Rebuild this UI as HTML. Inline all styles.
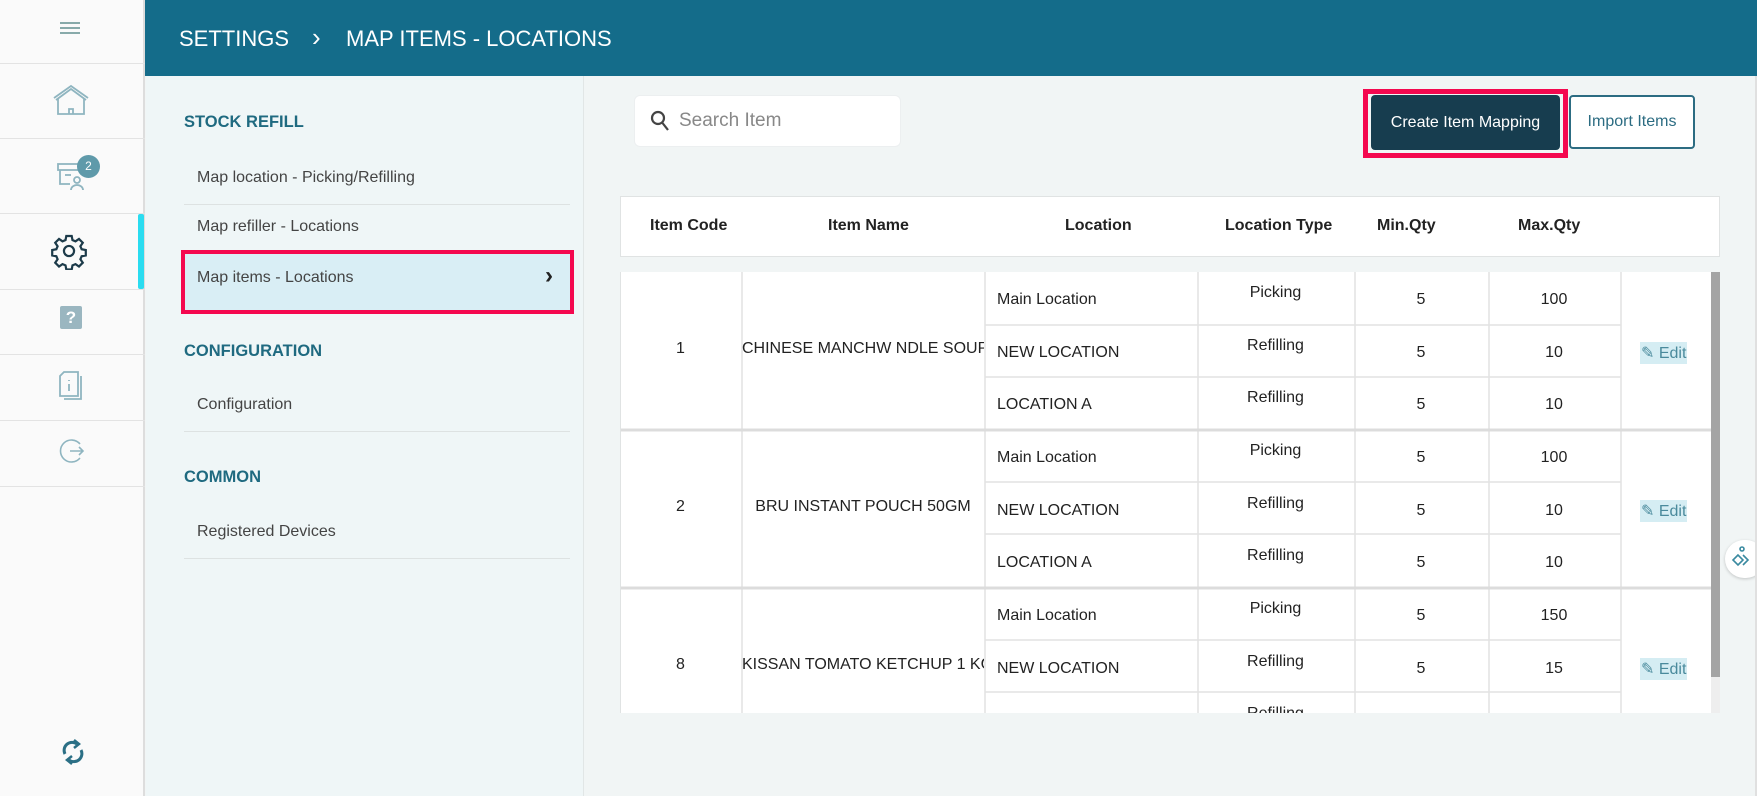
<!DOCTYPE html>
<html><head><meta charset="utf-8"><style>
*{box-sizing:border-box;margin:0;padding:0}
body{width:1757px;height:796px;overflow:hidden;background:#f1f5f5;font-family:"Liberation Sans",sans-serif;position:relative;color:#333}
.abs{position:absolute}
.rail{left:0;top:0;width:145px;height:796px;background:#fafafa;border-right:2px solid #ddd}
.rl{position:absolute;left:0;width:145px;height:1px;background:#e3e3e3}
.hdr{left:145px;top:0;width:1612px;height:76px;background:#146c8a;color:#fff;font-size:22px}
.side{left:146px;top:76px;width:438px;height:720px;background:#eff6f7;border-right:1px solid #e1e6e6}
.sec{position:absolute;left:38px;font-size:16.5px;font-weight:bold;color:#1f6a80}
.it{position:absolute;left:51px;font-size:16px;color:#444}
.ln{position:absolute;left:38px;width:386px;height:1px;background:#dde2e2}
.cell{position:absolute;font-size:16px;color:#222;text-align:center}
</style></head><body>
<div class="abs rail">
 <div class="abs" style="left:60px;top:22px;width:20px;height:2px;background:#8aa;box-shadow:0 5px 0 #8aa,0 10px 0 #8aa"></div>
 <div class="rl" style="top:63px"></div><div class="rl" style="top:138px"></div><div class="rl" style="top:213px"></div><div class="rl" style="top:289px"></div><div class="rl" style="top:354px"></div><div class="rl" style="top:420px"></div><div class="rl" style="top:486px"></div>
 <svg class="abs" style="left:52px;top:84px" width="38" height="32" viewBox="0 0 38 32" fill="none" stroke="#8fb5c0" stroke-width="1.8"><path d="M2 14 L19 2 L36 14"/><path d="M4 16 L19 5 L34 16"/><path d="M6 15 V30 H32 V15"/><path d="M17 30 V25 H21 V30"/></svg>
 <svg class="abs" style="left:56px;top:160px" width="32" height="32" viewBox="0 0 32 32" fill="none" stroke="#8fb5c0" stroke-width="1.8"><rect x="2" y="4" width="22" height="6"/><path d="M4 10 V24 H14"/><path d="M9 15 H15"/><circle cx="21" cy="20" r="3"/><path d="M15 30 a6 5 0 0 1 12 0"/></svg>
 <div class="abs" style="left:77px;top:155px;width:23px;height:23px;border-radius:50%;background:#5f9aaa;color:#fff;font-size:12px;text-align:center;line-height:23px">2</div>
 <div class="abs" style="left:138px;top:214px;width:6px;height:75px;background:#2adcf0;border-radius:2px"></div>
 <svg class="abs" style="left:50px;top:232px" width="38" height="38" viewBox="0 0 24 24" fill="none" stroke="#1d3b4a" stroke-width="1.4"><circle cx="12" cy="12" r="3.2"/><path d="M10.3 2.5h3.4l.5 2.6 1.9.8 2.2-1.5 2.4 2.4-1.5 2.2.8 1.9 2.6.5v3.4l-2.6.5-.8 1.9 1.5 2.2-2.4 2.4-2.2-1.5-1.9.8-.5 2.6h-3.4l-.5-2.6-1.9-.8-2.2 1.5-2.4-2.4 1.5-2.2-.8-1.900-2.6-.5v-3.4l2.6-.5.8-1.9-1.5-2.2 2.4-2.4 2.2 1.5 1.9-.8z"/></svg>
 <div class="abs" style="left:60px;top:306px;width:22px;height:23px;background:#9ab6c0;border-radius:2px;color:#fff;font-weight:bold;font-size:17px;text-align:center;line-height:23px">?</div>
 <svg class="abs" style="left:58px;top:370px" width="28" height="32" viewBox="0 0 28 32" fill="none" stroke="#8fb5c0" stroke-width="1.8"><path d="M6 2 H20 V26 H2 V6 Z"/><path d="M23 6 V29 H6"/><path d="M11 10 v1 M11 14 v7"/></svg>
 <svg class="abs" style="left:58px;top:437px" width="28" height="28" viewBox="0 0 28 28" fill="none" stroke="#8fb5c0" stroke-width="1.6"><path d="M22 7 A11 11 0 1 0 22 21"/><path d="M12 14 H25 M21 10 L25 14 L21 18"/></svg>
 <svg class="abs" style="left:60px;top:738px" width="26" height="28" viewBox="0 0 26 28" fill="none" stroke="#2b6f85" stroke-width="3"><path d="M5 16 A8 8 0 0 1 17 6"/><path d="M21 12 A8 8 0 0 1 9 22"/><path d="M14 2 L19 6 L14 10" stroke-width="2.5"/><path d="M12 18 L7 22 L12 26" stroke-width="2.5"/></svg>
</div>
<div class="abs hdr"><span class="abs" style="left:34px;top:26px">SETTINGS</span><span class="abs" style="left:167px;top:22px;font-size:26px">&#8250;</span><span class="abs" style="left:201px;top:26px">MAP ITEMS - LOCATIONS</span></div>
<div class="abs side">
 <div class="sec" style="top:37px">STOCK REFILL</div>
 <div class="it" style="top:93px">Map location - Picking/Refilling</div>
 <div class="ln" style="top:128px"></div>
 <div class="it" style="top:142px">Map refiller - Locations</div>
 <div class="abs" style="left:35px;top:174px;width:393px;height:64px;border:4px solid #f4084f;background:#d9eef5"></div>
 <div class="it" style="top:193px">Map items - Locations</div>
 <div class="abs" style="left:399px;top:186px;font-size:24px;font-weight:bold;color:#222">&#8250;</div>
 <div class="sec" style="top:266px">CONFIGURATION</div>
 <div class="it" style="top:320px">Configuration</div>
 <div class="ln" style="top:355px"></div>
 <div class="sec" style="top:392px">COMMON</div>
 <div class="it" style="top:447px">Registered Devices</div>
 <div class="ln" style="top:482px"></div>
</div>
<div class="abs" style="left:634px;top:95px;width:267px;height:52px;background:#fff;border-radius:6px;border:1px solid #eceff0"></div>
<svg class="abs" style="left:650px;top:110px" width="20" height="22" viewBox="0 0 20 22" fill="none" stroke="#444" stroke-width="2.2"><circle cx="8" cy="8" r="6"/><path d="M12.5 13 L18 20"/></svg>
<div class="abs" style="left:679px;top:110px;font-size:19px;color:#888">Search Item</div>
<div class="abs" style="left:1363px;top:89px;width:205px;height:69px;border:5px solid #f4084f"></div>
<div class="abs" style="left:1371px;top:95px;width:189px;height:55px;background:#173d4f;border-radius:4px;color:#fff;font-size:16px;text-align:center;line-height:55px">Create Item Mapping</div>
<div class="abs" style="left:1569px;top:95px;width:126px;height:54px;background:#fff;border:2px solid #2c6c82;border-radius:4px;color:#2c6c82;font-size:16px;text-align:center;line-height:50px">Import Items</div>
<div class="abs" style="left:620px;top:196px;width:1100px;height:61px;background:#fff;border:1px solid #e0e3e3"></div>
<div class="abs" style="top:217px;left:620px;width:1100px;font-size:16px;font-weight:bold;color:#222">
 <span class="abs" style="left:30px">Item Code</span><span class="abs" style="left:208px">Item Name</span><span class="abs" style="left:445px">Location</span><span class="abs" style="left:605px">Location Type</span><span class="abs" style="left:757px">Min.Qty</span><span class="abs" style="left:898px">Max.Qty</span>
</div>
<div class="abs" style="left:620px;top:272px;width:1091px;height:441px;background:#fff;overflow:hidden;border-left:1px solid #e0e3e3">
<svg class="abs" style="left:0;top:0" width="1091" height="441">
 <g stroke="#e2e2e2" stroke-width="1.5">
  <line x1="121" y1="0" x2="121" y2="441"/><line x1="364" y1="0" x2="364" y2="441"/><line x1="577" y1="0" x2="577" y2="441"/><line x1="734" y1="0" x2="734" y2="441"/><line x1="868" y1="0" x2="868" y2="441"/><line x1="1000" y1="0" x2="1000" y2="441"/>
  <line x1="364" y1="53" x2="1000" y2="53"/><line x1="364" y1="105" x2="1000" y2="105"/>
  <line x1="364" y1="210" x2="1000" y2="210"/><line x1="364" y1="262" x2="1000" y2="262"/>
  <line x1="364" y1="368" x2="1000" y2="368"/><line x1="364" y1="420" x2="1000" y2="420"/>
 </g>
 <g stroke="#dcdcdc" stroke-width="3"><line x1="0" y1="158" x2="1091" y2="158"/><line x1="0" y1="316" x2="1091" y2="316"/></g>
</svg>
</div>
<div class="abs" style="left:1711px;top:272px;width:9px;height:441px;background:#eee"><div style="width:9px;height:405px;background:#a4a4a4"></div></div>
<div class="abs" style="left:620px;top:272px;width:1091px;height:441px;overflow:hidden;font-size:16px;color:#222">
 <div class="cell" style="left:0;width:121px;top:68px">1</div>
 <div class="cell" style="left:122px;width:242px;top:68px;text-align:left;white-space:nowrap;overflow:hidden">CHINESE MANCHW NDLE SOUP</div>
 <div class="cell" style="left:377px;top:19px;text-align:left">Main Location</div>
 <div class="cell" style="left:377px;top:72px;text-align:left">NEW LOCATION</div>
 <div class="cell" style="left:377px;top:124px;text-align:left">LOCATION A</div>
 <div class="cell" style="left:577px;width:157px;top:12px">Picking</div>
 <div class="cell" style="left:577px;width:157px;top:65px">Refilling</div>
 <div class="cell" style="left:577px;width:157px;top:117px">Refilling</div>
 <div class="cell" style="left:734px;width:134px;top:19px">5</div><div class="cell" style="left:734px;width:134px;top:72px">5</div><div class="cell" style="left:734px;width:134px;top:124px">5</div>
 <div class="cell" style="left:868px;width:132px;top:19px">100</div><div class="cell" style="left:868px;width:132px;top:72px">10</div><div class="cell" style="left:868px;width:132px;top:124px">10</div>
 <div class="cell" style="left:1020px;top:70px;background:#d5edf3;color:#4a8a9c;padding:1px 1px">&#9998; Edit</div>
 <div class="cell" style="left:0;width:121px;top:226px">2</div>
 <div class="cell" style="left:122px;width:242px;top:226px">BRU INSTANT POUCH 50GM</div>
 <div class="cell" style="left:377px;top:177px;text-align:left">Main Location</div>
 <div class="cell" style="left:377px;top:230px;text-align:left">NEW LOCATION</div>
 <div class="cell" style="left:377px;top:282px;text-align:left">LOCATION A</div>
 <div class="cell" style="left:577px;width:157px;top:170px">Picking</div>
 <div class="cell" style="left:577px;width:157px;top:223px">Refilling</div>
 <div class="cell" style="left:577px;width:157px;top:275px">Refilling</div>
 <div class="cell" style="left:734px;width:134px;top:177px">5</div><div class="cell" style="left:734px;width:134px;top:230px">5</div><div class="cell" style="left:734px;width:134px;top:282px">5</div>
 <div class="cell" style="left:868px;width:132px;top:177px">100</div><div class="cell" style="left:868px;width:132px;top:230px">10</div><div class="cell" style="left:868px;width:132px;top:282px">10</div>
 <div class="cell" style="left:1020px;top:228px;background:#d5edf3;color:#4a8a9c;padding:1px 1px">&#9998; Edit</div>
 <div class="cell" style="left:0;width:121px;top:384px">8</div>
 <div class="cell" style="left:122px;width:242px;top:384px;text-align:left;white-space:nowrap;overflow:hidden">KISSAN TOMATO KETCHUP 1 KG</div>
 <div class="cell" style="left:377px;top:335px;text-align:left">Main Location</div>
 <div class="cell" style="left:377px;top:388px;text-align:left">NEW LOCATION</div>
 <div class="cell" style="left:577px;width:157px;top:328px">Picking</div>
 <div class="cell" style="left:577px;width:157px;top:381px">Refilling</div>
 <div class="cell" style="left:577px;width:157px;top:433px">Refilling</div>
 <div class="cell" style="left:734px;width:134px;top:335px">5</div><div class="cell" style="left:734px;width:134px;top:388px">5</div>
 <div class="cell" style="left:868px;width:132px;top:335px">150</div><div class="cell" style="left:868px;width:132px;top:388px">15</div>
 <div class="cell" style="left:1020px;top:386px;background:#d5edf3;color:#4a8a9c;padding:1px 1px">&#9998; Edit</div>
</div>
<div class="abs" style="left:1725px;top:540px;width:40px;height:38px;background:#fff;border-radius:19px;box-shadow:0 1px 3px rgba(0,0,0,.2)"></div>
<svg class="abs" style="left:1731px;top:546px" width="22" height="26" viewBox="0 0 22 26" fill="none" stroke="#3a8aa0" stroke-width="1.6"><circle cx="11" cy="3" r="2"/><path d="M7 9 L2 14 L7 19 L12 14 Z"/><path d="M12 9 L17 14 L12 19"/></svg>
<div class="abs" style="left:1755px;top:76px;width:2px;height:720px;background:#e0e0e0"></div>
</body></html>
